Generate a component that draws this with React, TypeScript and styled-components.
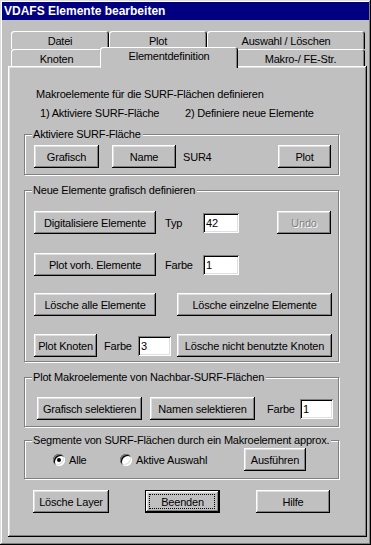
import React from "react";
import styled, { createGlobalStyle } from "styled-components";

const GlobalStyle = createGlobalStyle`
  html, body {
    margin: 0;
    padding: 0;
    background: #c0c0c0;
  }
  body {
    font-family: "Liberation Sans", Arial, sans-serif;
    font-size: 11px;
    letter-spacing: -0.2px;
    color: #000;
  }
  * {
    box-sizing: border-box;
  }
`;

const Window = styled.div`
  width: 371px;
  height: 545px;
  padding: 2px;
  background: #c0c0c0;
  box-shadow: inset -1px -1px #000, inset 1px 1px #dfdfdf,
    inset -2px -2px #808080, inset 2px 2px #fff;
  display: flex;
  flex-direction: column;
`;

const TitleBar = styled.div`
  height: 18px;
  background: #000080;
  color: #fff;
  font-weight: bold;
  font-size: 12px;
  letter-spacing: 0;
  line-height: 18px;
  padding-left: 2px;
`;

const Body = styled.div`
  margin: 11px 0 0 6px;
  width: 359px;
`;

const TabRow = styled.div<{ $h: number }>`
  display: flex;
  align-items: flex-start;
  margin-left: 3px;
  height: ${(p) => p.$h}px;
`;

const Tab = styled.div<{ $w: number; $h: number; $active?: boolean }>`
  position: relative;
  width: ${(p) => p.$w}px;
  height: ${(p) => p.$h}px;
  margin: ${(p) => (p.$active ? "-2px -2px 0 -2px" : "0")};
  z-index: ${(p) => (p.$active ? 2 : 0)};
  padding-top: ${(p) => (p.$active ? 3 : 4)}px;
  background: #c0c0c0;
  text-align: center;
  line-height: 13px;
  border-radius: 3px 3px 0 0;
  box-shadow: inset 1px 1px #fff, inset -1px 0 #000, inset -2px 0 #808080;
`;

const Panel = styled.div`
  width: 359px;
  height: 471px;
  padding: 2px;
  background: #c0c0c0;
  box-shadow: inset -1px -1px #000, inset 1px 1px #fff,
    inset -2px -2px #808080, inset 2px 2px #dfdfdf;
  display: flex;
  flex-direction: column;
`;

const Intro = styled.div`
  margin: 17px 0 0 26px;
  line-height: 19px;
`;

const IntroLine = styled.div<{ $pl?: number }>`
  display: flex;
  padding-left: ${(p) => p.$pl || 0}px;
`;

const Step = styled.span<{ $w?: number }>`
  width: ${(p) => (p.$w ? `${p.$w}px` : "auto")};
`;

const Group = styled.div<{ $top: number; $h: number; $pt: number }>`
  position: relative;
  margin: ${(p) => p.$top}px 0 0 14px;
  width: 315px;
  height: ${(p) => p.$h}px;
  padding-top: ${(p) => p.$pt}px;
  border: 1px solid #808080;
  box-shadow: 1px 1px 0 #fff, inset 1px 1px 0 #fff;
`;

const GroupLabel = styled.span`
  position: absolute;
  top: -7px;
  left: 7px;
  padding: 0 2px 0 1px;
  background: #c0c0c0;
  line-height: 13px;
  white-space: nowrap;
`;

const Row = styled.div<{ $mt?: number; $ml?: number }>`
  display: flex;
  align-items: center;
  height: 23px;
  margin-top: ${(p) => p.$mt || 0}px;
  margin-left: ${(p) => p.$ml || 0}px;
`;

const Button = styled.button<{
  $w: number;
  $ml?: number;
  $default?: boolean;
}>`
  position: relative;
  width: ${(p) => p.$w}px;
  height: 23px;
  margin: 0 0 0 ${(p) => p.$ml || 0}px;
  padding: 0;
  border: none;
  background: #c0c0c0;
  font: inherit;
  letter-spacing: inherit;
  color: #000;
  white-space: nowrap;
  box-shadow: ${(p) =>
    p.$default
      ? "inset 0 0 0 1px #000, inset -2px -2px #000, inset 2px 2px #fff, inset -3px -3px #808080, inset 3px 3px #dfdfdf"
      : "inset -1px -1px #000, inset 1px 1px #fff, inset -2px -2px #808080, inset 2px 2px #dfdfdf"};

  &:disabled {
    color: #808080;
    text-shadow: 1px 1px 0 #fff;
  }

  ${(p) =>
    p.$default &&
    `
    &::after {
      content: "";
      position: absolute;
      inset: 4px 5px 4px 4px;
      border: 1px dotted #000;
    }
  `}
`;

const Label = styled.span<{ $w: number; $ml?: number }>`
  width: ${(p) => p.$w}px;
  margin-left: ${(p) => p.$ml || 0}px;
  white-space: nowrap;
`;

const Field = styled.input<{ $w: number }>`
  width: ${(p) => p.$w}px;
  height: 20px;
  margin: 0;
  padding: 0 0 0 3px;
  border: none;
  outline: none;
  background: #fff;
  font: inherit;
  letter-spacing: inherit;
  color: #000;
  box-shadow: inset 1px 1px #808080, inset -1px -1px #fff,
    inset 2px 2px #000, inset -2px -2px #dfdfdf;
`;

const RadioOption = styled.label<{ $w: number; $ml?: number }>`
  display: flex;
  align-items: center;
  gap: 4px;
  width: ${(p) => p.$w}px;
  margin-left: ${(p) => p.$ml || 0}px;
`;

const RadioCircle = styled.span<{ $checked?: boolean }>`
  position: relative;
  width: 12px;
  height: 12px;
  border-radius: 50%;
  background: #fff;
  box-shadow: inset 1px 1px #808080, inset -1px -1px #fff,
    inset 2px 2px #000, inset -2px -2px #dfdfdf;

  &::after {
    content: "";
    display: ${(p) => (p.$checked ? "block" : "none")};
    position: absolute;
    left: 4px;
    top: 4px;
    width: 4px;
    height: 4px;
    border-radius: 50%;
    background: #000;
  }
`;

const App = () => {
  return (
    <>
      <GlobalStyle />
      <Window>
        <TitleBar>VDAFS Elemente bearbeiten</TitleBar>
        <Body>
          <TabRow $h={18}>
            <Tab $w={98} $h={18}>Datei</Tab>
            <Tab $w={98} $h={18}>Plot</Tab>
            <Tab $w={158} $h={18}>Auswahl / Löschen</Tab>
          </TabRow>
          <TabRow $h={17}>
            <Tab $w={91} $h={17}>Knoten</Tab>
            <Tab $w={138} $h={21} $active>
              Elementdefinition
            </Tab>
            <Tab $w={129} $h={17}>Makro-/ FE-Str.</Tab>
          </TabRow>
          <Panel>
            <Intro>
              <IntroLine>Makroelemente für die SURF-Flächen definieren</IntroLine>
              <IntroLine $pl={4}>
                <Step $w={145}>1) Aktiviere SURF-Fläche</Step>
                <Step>2) Definiere neue Elemente</Step>
              </IntroLine>
            </Intro>

            <Group $top={11} $h={41} $pt={10}>
              <GroupLabel>Aktiviere SURF-Fläche</GroupLabel>
              <Row>
                <Button $w={65} $ml={9}>Grafisch</Button>
                <Button $w={64} $ml={13}>Name</Button>
                <Label $w={95} $ml={7}>SUR4</Label>
                <Button $w={53}>Plot</Button>
              </Row>
            </Group>

            <Group $top={15} $h={172} $pt={20}>
              <GroupLabel>Neue Elemente grafisch definieren</GroupLabel>
              <Row>
                <Button $w={122} $ml={9}>Digitalisiere Elemente</Button>
                <Label $w={38} $ml={9}>Typ</Label>
                <Field $w={36} defaultValue="42" />
                <Button $w={54} $ml={38} disabled>
                  Undo
                </Button>
              </Row>
              <Row $mt={19}>
                <Button $w={122} $ml={9}>Plot vorh. Elemente</Button>
                <Label $w={38} $ml={9}>Farbe</Label>
                <Field $w={36} defaultValue="1" />
              </Row>
              <Row $mt={17}>
                <Button $w={122} $ml={9}>Lösche alle Elemente</Button>
                <Button $w={155} $ml={21}>Lösche einzelne Elemente</Button>
              </Row>
              <Row $mt={18}>
                <Button $w={63} $ml={9}>Plot Knoten</Button>
                <Label $w={34} $ml={7}>Farbe</Label>
                <Field $w={33} defaultValue="3" />
                <Button $w={155} $ml={6}>Lösche nicht benutzte Knoten</Button>
              </Row>
            </Group>

            <Group $top={15} $h={50} $pt={19}>
              <GroupLabel>Plot Makroelemente von Nachbar-SURF-Flächen</GroupLabel>
              <Row>
                <Button $w={105} $ml={12}>Grafisch selektieren</Button>
                <Button $w={105} $ml={8}>Namen selektieren</Button>
                <Label $w={33} $ml={12}>Farbe</Label>
                <Field $w={33} defaultValue="1" />
              </Row>
            </Group>

            <Group $top={13} $h={39} $pt={7}>
              <GroupLabel>
                Segmente von SURF-Flächen durch ein Makroelement approx.
              </GroupLabel>
              <Row>
                <RadioOption $w={67} $ml={28}>
                  <RadioCircle $checked />
                  Alle
                </RadioOption>
                <RadioOption $w={124}>
                  <RadioCircle />
                  Aktive Auswahl
                </RadioOption>
                <Button $w={62}>Ausführen</Button>
              </Row>
            </Group>

            <Row $mt={11}>
              <Button $w={76} $ml={23}>Lösche Layer</Button>
              <Button $w={75} $ml={36} $default>
                Beenden
              </Button>
              <Button $w={74} $ml={36}>Hilfe</Button>
            </Row>
          </Panel>
        </Body>
      </Window>
    </>
  );
};

export default App;
